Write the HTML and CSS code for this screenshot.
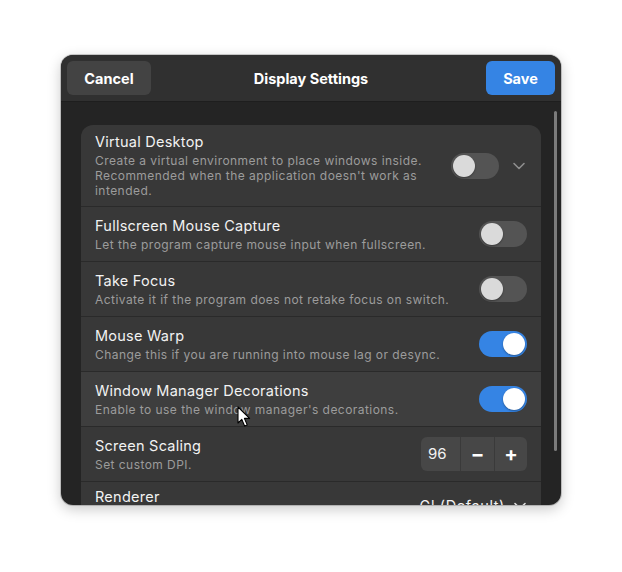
FILE: index.html
```html
<!DOCTYPE html>
<html>
<head>
<meta charset="utf-8">
<link rel="stylesheet" href="styles.css">
</head>
<body>
<div class="stage">
  <div class="window">
    <header class="headerbar">
      <div class="hb-start"><button class="btn btn-cancel">Cancel</button></div>
      <div class="title">Display Settings</div>
      <div class="hb-end"><button class="btn btn-save">Save</button></div>
    </header>
    <div class="content">
      <div class="scrollbar"></div>
      <div class="list">
        <div class="row row-tall">
          <div class="text">
            <div class="row-title">Virtual Desktop</div>
            <div class="row-sub">Create a virtual environment to place windows inside.<br>Recommended when the application doesn't work as<br>intended.</div>
          </div>
          <div class="toggle"><span class="knob"></span></div>
          <svg class="chevron" width="14" height="14" viewBox="0 0 14 14"><path d="M2 4.5 L7 9.5 L12 4.5" fill="none" stroke="#8e8e8e" stroke-width="1.6" stroke-linecap="round" stroke-linejoin="round"/></svg>
        </div>
        <div class="row">
          <div class="text">
            <div class="row-title">Fullscreen Mouse Capture</div>
            <div class="row-sub">Let the program capture mouse input when fullscreen.</div>
          </div>
          <div class="toggle"><span class="knob"></span></div>
        </div>
        <div class="row">
          <div class="text">
            <div class="row-title">Take Focus</div>
            <div class="row-sub">Activate it if the program does not retake focus on switch.</div>
          </div>
          <div class="toggle"><span class="knob"></span></div>
        </div>
        <div class="row">
          <div class="text">
            <div class="row-title">Mouse Warp</div>
            <div class="row-sub">Change this if you are running into mouse lag or desync.</div>
          </div>
          <div class="toggle on"><span class="knob"></span></div>
        </div>
        <div class="row hover">
          <div class="text">
            <div class="row-title">Window Manager Decorations</div>
            <div class="row-sub">Enable to use the window manager's decorations.</div>
          </div>
          <div class="toggle on"><span class="knob"></span></div>
        </div>
        <div class="row">
          <div class="text">
            <div class="row-title">Screen Scaling</div>
            <div class="row-sub">Set custom DPI.</div>
          </div>
          <div class="spin">
            <div class="spin-value">96</div>
            <div class="spin-btn">&#8722;</div>
            <div class="spin-btn">+</div>
          </div>
        </div>
        <div class="row row-last">
          <div class="text">
            <div class="row-title">Renderer</div>
            <div class="row-sub">&nbsp;</div>
          </div>
          <div class="dropdown">Gl (Default)
            <svg class="chevron" width="14" height="14" viewBox="0 0 14 14"><path d="M2 4.5 L7 9.5 L12 4.5" fill="none" stroke="#e0e0e0" stroke-width="1.6" stroke-linecap="round" stroke-linejoin="round"/></svg>
          </div>
        </div>
      </div>
      <svg class="cursor" width="14" height="22" viewBox="0 0 14 22"><path d="M1 1 L1 17 L4.8 13.4 L7.6 20 L10.2 18.9 L7.4 12.4 L12.6 12.4 Z" fill="#ffffff" stroke="#000000" stroke-width="1.1" stroke-linejoin="round"/></svg>
    </div>
  </div>
</div>
</body>
</html>
```
FILE: styles.css
```css
* { box-sizing: border-box; }
html, body {
  margin: 0;
  padding: 0;
  background: #ffffff;
}
body {
  font-family: Inter, "Noto Sans", sans-serif;
  width: 622px;
  height: 572px;
  overflow: hidden;
}
.stage {
  padding: 55px 0 0 61px;
}
.window {
  width: 500px;
  height: 450px;
  border-radius: 12px;
  overflow: hidden;
  background: #242424;
  box-shadow: 0 0 0 1px rgba(0,0,0,0.18), 0 4px 14px rgba(0,0,0,0.22);
  display: flex;
  flex-direction: column;
}
.headerbar {
  height: 47px;
  flex: none;
  background: #303030;
  border-bottom: 1px solid #1e1e1e;
  display: grid;
  grid-template-columns: 1fr auto 1fr;
  align-items: center;
  padding: 0 6px;
}
.hb-end {
  display: flex;
  justify-content: flex-end;
}
.btn {
  font-family: inherit;
  font-weight: 700;
  font-size: 14.5px;
  color: #ffffff;
  border: none;
  border-radius: 6px;
  height: 34px;
  padding: 0;
  display: block;
}
.btn-cancel {
  width: 84px;
  background: #434343;
}
.btn-save {
  width: 69px;
  background: #3584e4;
}
.title {
  font-weight: 700;
  font-size: 14.5px;
  color: #ffffff;
}
.content {
  position: relative;
  flex: 1;
  padding: 23px 20px 0 20px;
}
.scrollbar {
  position: absolute;
  right: 4px;
  top: 9px;
  width: 3px;
  height: 340px;
  border-radius: 2px;
  background: #7b7b7b;
}
.list {
  background: #383838;
  border-radius: 12px;
}
.row {
  display: flex;
  align-items: center;
  min-height: 55px;
  padding: 6px 14px;
  border-bottom: 1px solid #2a2a2a;
}
.row-tall {
  min-height: 82px;
}
.row.hover {
  background: #3e3e3e;
}
.text {
  flex: 1;
  min-width: 0;
}
.row-title {
  font-size: 14.5px;
  line-height: 18px;
  color: #f2f2f2;
  letter-spacing: 0.25px;
}
.row-sub {
  margin-top: 2px;
  font-size: 12px;
  line-height: 15px;
  color: #9c9c9c;
  letter-spacing: 0.45px;
}
.toggle {
  flex: none;
  width: 48px;
  height: 26px;
  border-radius: 13px;
  background: #545454;
  position: relative;
}
.toggle .knob {
  position: absolute;
  top: 2px;
  left: 2px;
  width: 22px;
  height: 22px;
  border-radius: 50%;
  background: #dadada;
  box-shadow: 0 1px 2px rgba(0,0,0,0.35);
}
.toggle.on {
  background: #3584e4;
}
.toggle.on .knob {
  left: 24px;
  background: #ffffff;
}
.row-tall .chevron {
  flex: none;
  margin-left: 13px;
  margin-right: 1px;
}
.spin {
  flex: none;
  display: flex;
  height: 34px;
  border-radius: 6px;
  background: #474747;
  overflow: hidden;
}
.spin-value {
  width: 40px;
  padding-left: 7px;
  font-size: 15px;
  line-height: 34px;
  color: #f2f2f2;
  border-right: 1px solid #3a3a3a;
}
.spin-btn {
  width: 33px;
  text-align: center;
  font-size: 20px;
  font-weight: 700;
  line-height: 34px;
  color: #ffffff;
}
.spin-btn + .spin-btn {
  border-left: 1px solid #3a3a3a;
}
.row-last {
  align-items: flex-start;
}
.dropdown {
  flex: none;
  display: flex;
  align-items: center;
  gap: 8px;
  font-size: 14.5px;
  line-height: 20px;
  color: #f2f2f2;
  letter-spacing: 0.6px;
  margin-top: 8px;
}
.cursor {
  position: absolute;
  left: 176px;
  top: 304px;
}
```
